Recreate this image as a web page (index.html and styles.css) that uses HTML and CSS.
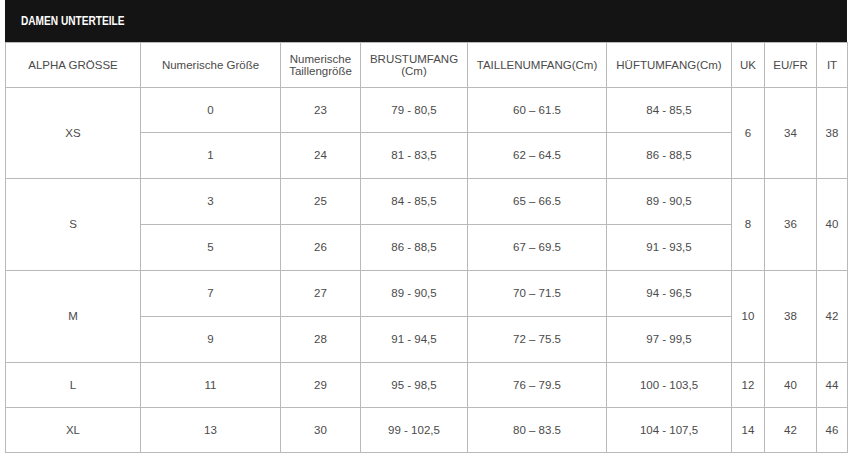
FILE: index.html
```html
<!DOCTYPE html>
<html lang="de">
<head>
<meta charset="utf-8">
<title>Damen Unterteile</title>
<link rel="stylesheet" href="styles.css">
</head>
<body>
<div class="chart">
  <div class="chart-title"><span class="chart-title-text">DAMEN UNTERTEILE</span></div>
  <table class="size-table">
    <colgroup>
      <col class="c1"><col class="c2"><col class="c3"><col class="c4"><col class="c5"><col class="c6"><col class="c7"><col class="c8"><col class="c9">
    </colgroup>
    <thead>
      <tr class="head-row">
        <th>ALPHA GRÖSSE</th>
        <th>Numerische Größe</th>
        <th>Numerische Taillengröße</th>
        <th>BRUSTUMFANG<br>(Cm)</th>
        <th>TAILLENUMFANG(Cm)</th>
        <th>HÜFTUMFANG(Cm)</th>
        <th>UK</th>
        <th>EU/FR</th>
        <th>IT</th>
      </tr>
    </thead>
    <tbody>
      <tr class="r45"><td rowspan="2">XS</td><td>0</td><td>23</td><td>79 - 80,5</td><td>60 – 61.5</td><td>84 - 85,5</td><td rowspan="2">6</td><td rowspan="2">34</td><td rowspan="2">38</td></tr>
      <tr class="r46"><td>1</td><td>24</td><td>81 - 83,5</td><td>62 – 64.5</td><td>86 - 88,5</td></tr>
      <tr class="r46"><td rowspan="2">S</td><td>3</td><td>25</td><td>84 - 85,5</td><td>65 – 66.5</td><td>89 - 90,5</td><td rowspan="2">8</td><td rowspan="2">36</td><td rowspan="2">40</td></tr>
      <tr class="r46"><td>5</td><td>26</td><td>86 - 88,5</td><td>67 – 69.5</td><td>91 - 93,5</td></tr>
      <tr class="r46"><td rowspan="2">M</td><td>7</td><td>27</td><td>89 - 90,5</td><td>70 – 71.5</td><td>94 - 96,5</td><td rowspan="2">10</td><td rowspan="2">38</td><td rowspan="2">42</td></tr>
      <tr class="r46"><td>9</td><td>28</td><td>91 - 94,5</td><td>72 – 75.5</td><td>97 - 99,5</td></tr>
      <tr class="r45"><td>L</td><td>11</td><td>29</td><td>95 - 98,5</td><td>76 – 79.5</td><td>100 - 103,5</td><td>12</td><td>40</td><td>44</td></tr>
      <tr class="r45"><td>XL</td><td>13</td><td>30</td><td>99 - 102,5</td><td>80 – 83.5</td><td>104 - 107,5</td><td>14</td><td>42</td><td>46</td></tr>
    </tbody>
  </table>
</div>
</body>
</html>
```
FILE: styles.css
```css
html, body {
  margin: 0;
  padding: 0;
  background: #ffffff;
}
.chart {
  margin-left: 5px;
  width: 842px;
}
.chart-title {
  background: #141414;
  height: 42px;
  box-sizing: border-box;
  padding-left: 16px;
  display: flex;
  align-items: center;
  color: #ffffff;
  font-family: "Liberation Sans", Arial, sans-serif;
  font-weight: bold;
  font-size: 12.5px;
}
.chart-title-text {
  display: inline-block;
  transform: scaleX(0.81);
  transform-origin: left center;
  white-space: nowrap;
}
.size-table {
  width: 842px;
  table-layout: fixed;
  border-collapse: collapse;
  font-family: "Liberation Sans", Arial, sans-serif;
  font-size: 11.5px;
  color: #4a4a4a;
}
.c1 { width: 135px; }
.c2 { width: 140px; }
.c3 { width: 80px; }
.c4 { width: 107px; }
.c5 { width: 139px; }
.c6 { width: 125px; }
.c7 { width: 33px; }
.c8 { width: 52px; }
.c9 { width: 31px; }
.size-table th,
.size-table td {
  border: 1px solid #b9b9b9;
  text-align: center;
  vertical-align: middle;
  padding: 0;
  font-weight: normal;
  line-height: 12.5px;
}
.head-row { height: 45px; }
.r45 { height: 45px; }
.r46 { height: 46px; }
```
